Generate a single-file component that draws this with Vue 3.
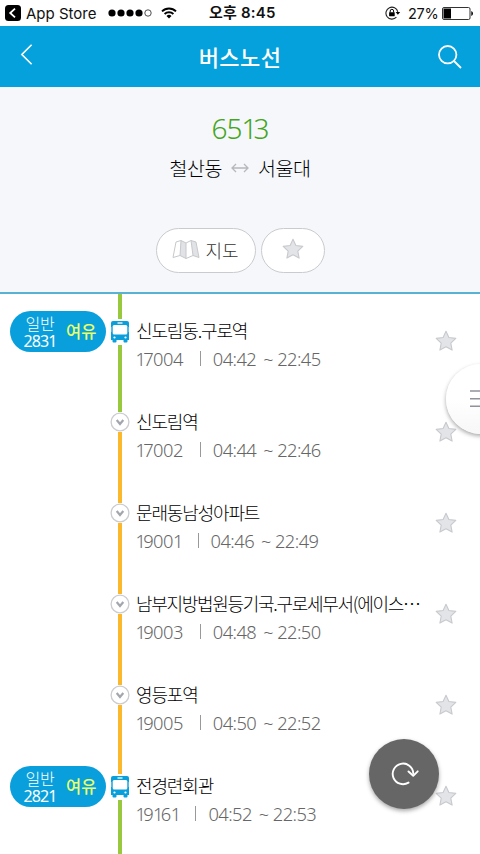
<script setup>
const stops = [
  { name: '신도림동.구로역', code: '17004', first: '04:42', last: '22:45', bus: '2831', above: 'green', below: 'green' },
  { name: '신도림역', code: '17002', first: '04:44', last: '22:46', above: 'green', below: 'orange' },
  { name: '문래동남성아파트', code: '19001', first: '04:46', last: '22:49', above: 'orange', below: 'orange' },
  { name: '남부지방법원등기국.구로세무서(에이스⋯', code: '19003', first: '04:48', last: '22:50', above: 'orange', below: 'orange', long: true },
  { name: '영등포역', code: '19005', first: '04:50', last: '22:52', above: 'orange', below: 'orange' },
  { name: '전경련회관', code: '19161', first: '04:52', last: '22:53', bus: '2821', above: 'orange', below: 'green' },
]
const star = 'M12 2.2 L14.9 8.5 L21.8 9.4 L16.8 14.2 L18.1 21.1 L12 17.8 L5.9 21.1 L7.2 14.2 L2.2 9.4 L9.1 8.5 Z'
</script>

<template>
  <div class="screen">
    <div class="status">
      <svg class="back-app" viewBox="0 0 16 16"><rect width="16" height="16" rx="3.5" fill="#000" /><path d="M10 3.6 5.2 8l4.8 4.4" fill="none" stroke="#fff" stroke-width="1.8" /></svg>
      <span class="store">App Store</span>
      <svg class="signal" viewBox="0 0 44 8">
        <circle v-for="n in 4" :key="n" :cx="n * 9 - 5" cy="4" r="3.6" />
        <circle cx="40" cy="4" r="3.2" fill="none" stroke="#222" stroke-width=".8" />
      </svg>
      <svg class="wifi" viewBox="0 0 16 12"><path d="M1 4.4a10 10 0 0 1 14 0M3.6 7a6.4 6.4 0 0 1 8.8 0" fill="none" stroke="#000" stroke-width="1.9" /><path d="M5.5 9a3.7 3.7 0 0 1 5 0L8 11.6z" /></svg>
      <span class="clock">오후 8:45</span>
      <svg class="lock" viewBox="0 0 16 14"><path d="M12.8 5.8A6 6 0 1 0 11.4 11.2" fill="none" stroke="#222" stroke-width="1.1" /><path d="M10.6 5.9h4.6l-2.3 2.8z" /><rect x="4.1" y="6.2" width="5.6" height="4" rx=".4" /><path d="M5.2 6.5V5a1.7 1.7 0 0 1 3.4 0v1.5" fill="none" stroke="#000" stroke-width="1" /></svg>
      <span class="percent">27%</span>
      <svg class="battery" viewBox="0 0 32 13"><rect x=".5" y=".5" width="27.5" height="12" rx="1.5" fill="#fff" stroke="#333" /><rect x="1.5" y="1.5" width="7.5" height="10" /><path d="M29.3 4q1.7.6 1.7 2.5t-1.7 2.5z" /></svg>
    </div>

    <header class="bar">
      <svg class="chevron" viewBox="0 0 14 24"><path d="M12.5 1.5 2 12l10.5 10.5" /></svg>
      <h1>버스노선</h1>
      <svg class="search" viewBox="0 0 26 26"><circle cx="10.7" cy="10.7" r="8.7" /><path d="m17 17 7 7" /></svg>
    </header>

    <section class="summary">
      <div class="route">65<span class="one">1</span>3</div>
      <div class="ends">
        <span>철산동</span>
        <svg viewBox="0 0 18 10"><path d="M1 5h16M5 1 1 5l4 4M13 1l4 4-4 4" /></svg>
        <span>서울대</span>
      </div>
      <div class="actions">
        <button class="map">
          <svg viewBox="0 0 28 22">
            <path d="M4 3 9 1.5 14 4l5-2.5L24 3l3 15.5-6-2-7 3-6-3-7 2z" fill="#fff" />
            <path d="M9 1.5 14 4v15.5l-6-3zM19 1.5 24 3l3 15.5-6-2z" fill="#e0e2e5" />
            <path d="M4 3 9 1.5 14 4l5-2.5L24 3l3 15.5-6-2-7 3-6-3-7 2zM9 1.5l-1 15M14 4v15.5M19 1.5l2 15" fill="none" stroke="#c6c8cb" stroke-width="1" />
          </svg>
          <span>지도</span>
        </button>
        <button class="fav"><svg class="star" viewBox="0 0 24 24"><path :d="star" /></svg></button>
      </div>
    </section>

    <main class="stops">
      <article v-for="s in stops" :key="s.code" class="stop">
        <div class="badge-cell">
          <div v-if="s.bus" class="badge">
            <div class="kind">
              <span>일반</span>
              <span class="num">{{ s.bus }}</span>
            </div>
            <span class="seats">여유</span>
          </div>
        </div>
        <div class="track">
          <i class="seg above" :class="s.above"></i>
          <svg v-if="s.bus" class="bus" viewBox="0 0 20 26">
            <path d="M3 2h14q2 0 2 2v17H1V4q0-2 2-2z" fill="#099fdb" />
            <path d="M2.500 20h4v2.500q0 1-1 1h-2q-1 0-1-1zM13.500 20h4v2.500q0 1-1 1h-2q-1 0-1-1z" fill="#099fdb" />
            <path d="M1 8v5M19 8v5" stroke="#fff" stroke-width=".6" />
            <rect x="2.700" y="6" width="14.600" height="9.500" rx="1.500" fill="#fff" />
            <path d="M7.500 4h5" stroke="#fff" stroke-width="1.300" />
            <circle cx="4.500" cy="18.500" r="1.100" fill="#fff" /><circle cx="15.500" cy="18.500" r="1.100" fill="#fff" />
          </svg>
          <svg v-else class="node" viewBox="0 0 20 20"><circle cx="10" cy="10" r="8.900" fill="#fff" stroke="#cbccd0" stroke-width="1.300" /><path d="m6.700 8 3.300 4 3.300-4" fill="none" stroke="#a3a6ae" stroke-width="2.200" /></svg>
          <i class="seg below" :class="s.below"></i>
        </div>
        <div class="info">
          <div class="name" :class="{ long: s.long }">{{ s.name }}</div>
          <div class="meta">
            <span class="code"><span v-for="(c, i) in s.code" :key="i" :class="{ one: c === '1' }">{{ c }}</span></span>
            <i class="divider"></i>
            <span class="first">{{ s.first }}</span>
            <span class="tilde">~</span>
            <span class="last">{{ s.last }}</span>
          </div>
        </div>
        <svg class="star" viewBox="0 0 24 24"><path :d="star" /></svg>
      </article>
    </main>

    <button class="side-menu"><svg viewBox="0 0 20 20"><path d="M0 2h20M0 9.700h20M0 17.300h20" /></svg></button>
    <button class="refresh"><svg viewBox="0 0 28 26"><path d="M17.500 22.600A10.300 10.300 0 1 1 22.300 13.500" /><path d="m17.500 11.500 4.700 4.300 4.500-4.500" /></svg></button>
  </div>
</template>

<style>
body { margin: 0; }
</style>

<style scoped>
* { box-sizing: border-box; }
.screen { position: relative; width: 480px; height: 854px; overflow: hidden; background: #fff; font-family: "Noto Sans CJK KR", sans-serif; }
svg { display: block; flex: none; }
button { border: 0; padding: 0; margin: 0; font-family: inherit; }
.status { height: 26px; display: flex; align-items: center; padding-left: 5px; white-space: nowrap; color: #111; font-family: Inter, "Noto Sans CJK KR", sans-serif; }
.back-app { width: 16px; height: 16px; }
.store { width: 72px; margin-left: 5px; font-size: 15px; }
.signal { width: 44px; height: 8px; margin-left: 10px; }
.wifi { width: 16px; height: 12px; margin-left: 9px; }
.clock { width: 68px; margin-left: 32px; font-size: 15px; line-height: 20px; font-weight: 600; letter-spacing: .2px; }
.lock { width: 16px; height: 14px; margin-left: 108px; }
.percent { width: 31px; margin-left: 7px; font-size: 14.5px; letter-spacing: -.3px; }
.battery { width: 32px; height: 13px; margin-left: 3px; }
.bar { height: 61px; background: #05a1dc; display: flex; align-items: center; justify-content: space-between; padding: 0 17px 0 20px; }
.bar svg { fill: none; stroke: #fff; stroke-width: 1.8; }
.chevron { width: 13px; height: 23px; margin-top: -4px; }
.search { width: 26px; height: 26px; }
.bar h1 { margin: -2px 0 0 10px; color: #fff; font-size: 22px; line-height: 30px; font-weight: 500; letter-spacing: .4px; }
.summary { height: 207px; background: #f5f7fa; border-bottom: 2px solid #57b2d5; display: flex; flex-direction: column; align-items: center; }
.route { margin-top: 24px; height: 34px; line-height: 34px; font-family: "Noto Sans", sans-serif; font-weight: 300; font-size: 28px; letter-spacing: -1px; color: #43a520; }
.one { letter-spacing: -.15em; }
.ends { display: flex; align-items: center; gap: 9px; height: 30px; margin-top: 8px; font-size: 19.5px; color: #000; letter-spacing: -.4px; font-weight: 300; }
.ends span { margin-top: -2px; }
.ends svg { width: 18px; height: 10px; fill: none; stroke: #b6b8bc; stroke-width: 1.3; }
.actions { display: flex; gap: 5px; margin-top: 45px; }
.map, .fav { height: 45px; border: 1px solid #cacbce; border-radius: 23px; background: #fff; display: flex; align-items: center; }
.map { width: 100px; padding-left: 15px; gap: 6px; font-size: 18px; color: #333; font-weight: 300; }
.map span { margin-top: -2px; }
.map svg { width: 28px; height: 22px; margin-top: -2px; }
.fav { width: 64px; justify-content: center; padding-bottom: 3px; }
.star { width: 24px; height: 24px; }
.star path { fill: #e2e4e8; stroke: #c7c9cd; stroke-width: 1.1; stroke-linejoin: round; }
.stop { height: 91px; display: flex; align-items: flex-start; }
.badge-cell { width: 110px; padding: 17px 0 0 10px; flex: none; }
.badge { width: 96px; height: 41px; border-radius: 21px; background: #089fdc; display: flex; align-items: center; color: #fff; }
.kind { width: 56px; padding-left: 4px; display: flex; flex-direction: column; align-items: center; font-size: 16px; line-height: 18px; letter-spacing: -.3px; font-weight: 300; }
.num { font-family: "Noto Sans", sans-serif; font-size: 16px; line-height: 18px; letter-spacing: -.9px; font-weight: 400; }
.seats { color: #e9ff69; font-size: 16.5px; font-weight: 500; line-height: 20px; margin-top: -2px; }
.track { width: 20px; height: 91px; display: flex; flex-direction: column; align-items: center; flex: none; }
.stop:last-child .track { height: 105px; }
.seg { width: 4px; flex: none; }
.above { height: 27px; }
.below { flex: 1; }
.green { background: #97c83e; }
.orange { background: #fbb82d; }
.node { width: 20px; height: 20px; }
.bus { width: 20px; height: 26px; }
.track:has(.bus) .above { height: 25px; }
.info { width: 304px; padding: 23px 0 0 6px; flex: none; white-space: nowrap; }
.name { height: 28px; line-height: 27px; font-size: 18px; letter-spacing: -1.15px; font-weight: 300; color: #000; }
.long { letter-spacing: -1.3px; }
.meta { height: 27px; display: flex; align-items: center; font-family: "Noto Sans", sans-serif; font-weight: 300; font-size: 18.3px; line-height: 27px; letter-spacing: -.55px; color: #666; }
.code { margin-left: -.5px; }
.divider { width: 1px; height: 15px; background: #999; margin: 0 12px 0 17px; }
.tilde { margin: 0 4px 0 7px; }
.stop > .star { margin: 35px 0 0; }
.side-menu { position: absolute; left: 446px; top: 364px; width: 70px; height: 70px; border-radius: 50%; background: linear-gradient(#fff 50%, #f7f7f7); box-shadow: 0 2px 4px rgba(0, 0, 0, .35); }
.side-menu svg { width: 20px; height: 20px; margin-left: 24px; fill: none; stroke: #8f929a; stroke-width: 1.4; }
.refresh { position: absolute; left: 369px; top: 739px; width: 70px; height: 70px; border-radius: 50%; background: #666; box-shadow: 0 2px 4px rgba(0, 0, 0, .35); }
.refresh svg { width: 28px; height: 26px; margin: -2px 0 0 22px; fill: none; stroke: #fff; stroke-width: 1.9; stroke-linecap: round; stroke-linejoin: round; }
</style>
